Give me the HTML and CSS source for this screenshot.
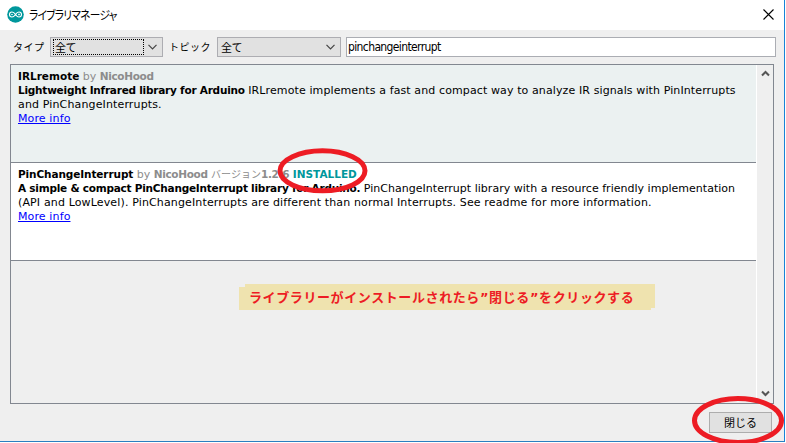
FILE: index.html
```html
<!DOCTYPE html>
<html lang="ja">
<head>
<meta charset="utf-8">
<title>ライブラリマネージャ</title>
<link rel="stylesheet" href="styles.css">
</head>
<body>
<div class="window">
  <header class="titlebar">
    <svg class="logo" width="17" height="17" viewBox="0 0 17 17"><circle cx="8.5" cy="8.5" r="8.3" fill="#00979c"/><g fill="none" stroke="#fff" stroke-width="1.1"><path d="M8.5 8.5C7.4 6.8 6.5 6 5 6a2.5 2.5 0 0 0 0 5c1.500 0 2.400-.8 3.500-2.500S10.500 6 12 6a2.500 2.500 0 0 1 0 5c-1.500 0-2.400-.8-3.500-2.500Z"/><path d="M4 8.500h2M11 8.500h2M12 7.500v2" stroke-width=".7"/></g></svg>
    <h1 class="title">ライブラリマネージャ</h1>
    <svg class="close" width="11" height="11" viewBox="0 0 11 11"><path d="M.5.5l10 10M10.500.5l-10 10" stroke="#000" stroke-width="1.100"/></svg>
  </header>
  <div class="toolbar">
    <span class="label label-type">タイプ</span>
    <div class="select select-type"><span class="value focused">全て</span><svg width="9" height="6" viewBox="0 0 9 6"><path d="M.5.8l4 4 4-4" fill="none" stroke="#444" stroke-width="1.2"/></svg></div>
    <span class="label label-topic">トピック</span>
    <div class="select select-topic"><span class="value">全て</span><svg width="9" height="6" viewBox="0 0 9 6"><path d="M.5.8l4 4 4-4" fill="none" stroke="#444" stroke-width="1.2"/></svg></div>
    <div class="search">pinchangeinterrupt</div>
  </div>
  <main class="list">
    <div class="entries">
      <article class="entry shaded">
        <p><b class="n1">IRLremote</b> <span class="by">by <b class="author">NicoHood</b></span></p>
        <p><b class="d1">Lightweight Infrared library for Arduino</b> <span class="t1">IRLremote implements a fast and compact way to analyze IR signals with PinInterrupts</span></p>
        <p class="t3">and PinChangeInterrupts.</p>
        <p><a>More info</a></p>
      </article>
      <article class="entry">
        <p><b class="n2">PinChangeInterrupt</b> <span class="by">by <b class="author">NicoHood</b> <span class="ver">バージョン</span><b class="num">1.2.6</b></span> <b class="installed">INSTALLED</b></p>
        <p><b class="d2">A simple &amp; compact PinChangeInterrupt library for Arduino.</b> <span class="t2">PinChangeInterrupt library with a resource friendly implementation</span></p>
        <p class="t3">(API and LowLevel). PinChangeInterrupts are different than normal Interrupts. See readme for more information.</p>
        <p><a>More info</a></p>
      </article>
    </div>
    <div class="scrollbar">
      <svg width="9" height="7" viewBox="0 0 9 7"><path d="M1 5.500l3.500-3.500L8 5.500" fill="none" stroke="#555" stroke-width="2"/></svg>
      <svg width="9" height="7" viewBox="0 0 9 7"><path d="M1 1.500L4.500 5 8 1.500" fill="none" stroke="#555" stroke-width="2"/></svg>
    </div>
  </main>
  <footer class="footer"><div class="button">閉じる</div></footer>
</div>
<div class="note">ライブラリーがインストールされたら<span class="q">”</span>閉じる<span class="q">”</span>をクリックする</div>
<svg class="marks" width="786" height="443" viewBox="0 0 786 443"><g fill="none" stroke="#ed1c24" stroke-width="5"><ellipse cx="322.500" cy="170.800" rx="42.500" ry="20"/><ellipse cx="738" cy="420.500" rx="43.500" ry="22"/></g></svg>
</body>
</html>
```
FILE: styles.css
```css
* { box-sizing: border-box; }
body { margin: 0; width: 786px; height: 443px; overflow: hidden; position: relative; background: #fff; font: 11px/14px "DejaVu Sans", "Noto Sans CJK JP", sans-serif; color: #000; }
.window { width: 785px; height: 442px; display: flex; flex-direction: column; background: #efefef; border-right: 1px solid #1883d7; border-bottom: 1px solid #2a7fc0; }
.titlebar { height: 30px; display: flex; align-items: center; background: #fff; padding: 0 10px 1px 7px; }
.logo { margin-right: 5px; }
.title { margin: 0 auto 0 0; font: 12px/16px "Noto Sans CJK JP", sans-serif; font-feature-settings: "palt"; letter-spacing: -.8px; transform: scaleX(.89); transform-origin: left; }
.toolbar { height: 34px; display: flex; align-items: center; padding: 0 8px 0 13px; font-family: "Noto Sans CJK JP", sans-serif; }
.label { font-size: 10px; letter-spacing: .5px; }
.label-type { width: 37px; }
.label-topic { width: 48px; margin-left: 6px; }
.select { height: 20px; display: flex; align-items: center; justify-content: space-between; background: #e1e1e1; border: 1px solid #adadb2; padding: 0 5px 0 2px; }
.select-type { width: 113px; }
.select-topic { width: 124px; }
.value { height: 15px; line-height: 13px; padding: 1px; letter-spacing: -.5px; }
.focused { width: 91px; height: 16px; line-height: 14px; padding: 0 0 0 1px; border: 1px dotted #000; }
.search { flex: 1; height: 20px; margin-left: 5px; padding: 0 1px; background: #fff; border: 1px solid #abadb3; font: 12px/18px "DejaVu Sans Condensed", "DejaVu Sans", sans-serif; letter-spacing: -.62px; }
.list { width: 764px; height: 340px; margin-left: 10px; display: flex; border: 1px solid #828790; }
.entries { flex: 1; min-width: 0; border-right: 1px solid #fff; }
.entry { height: 98px; padding: 5px 0 0 7px; background: #fff; border-bottom: 1px solid #828790; white-space: nowrap; }
.shaded { background: #ebf1f1; }
.entry p { margin: 0; height: 14px; }
.entry b { font-size: 10.5px; line-height: 1px; }
.entry .n2 { letter-spacing: -.1px; }
.entry .d1 { letter-spacing: -.23px; }
.entry .d2 { letter-spacing: -.23px; }
.entry .author { letter-spacing: -.34px; }
.entry .num { letter-spacing: -.3px; }
.t1 { letter-spacing: .11px; }
.t2 { letter-spacing: .02px; }
.t3 { letter-spacing: .14px; }
.entry a { color: #00f; text-decoration: underline; letter-spacing: .12px; }
.by { color: #8c8c8c; }
.ver { font: 10px/1px "Noto Sans CJK JP", sans-serif; }
.installed { color: #00979c; }
.scrollbar { width: 16px; display: flex; flex-direction: column; align-items: center; justify-content: space-between; padding: 5px 0 6px; }
.footer { height: 37px; display: flex; justify-content: flex-end; padding: 8px 12px 0 0; }
.button { width: 63px; height: 21px; background: #e1e1e1; border: 1px solid #adadad; text-align: center; font: 11px/19px "Noto Sans CJK JP", sans-serif; }
.note { position: absolute; left: 239px; top: 284px; width: 416px; height: 26px; padding-left: 10px; background: #efe3af; color: #ed1c24; font: bold 13px/25px "Noto Sans CJK JP", sans-serif; letter-spacing: .6px; white-space: nowrap; clip-path: polygon(6px 0, 100% 0, 100% 24px, 412px 24px, 412px 100%, 0 100%, 0 3px, 6px 3px); }
.q { font-family: "DejaVu Sans", sans-serif; }
.marks { position: absolute; left: 0; top: 0; }
```
